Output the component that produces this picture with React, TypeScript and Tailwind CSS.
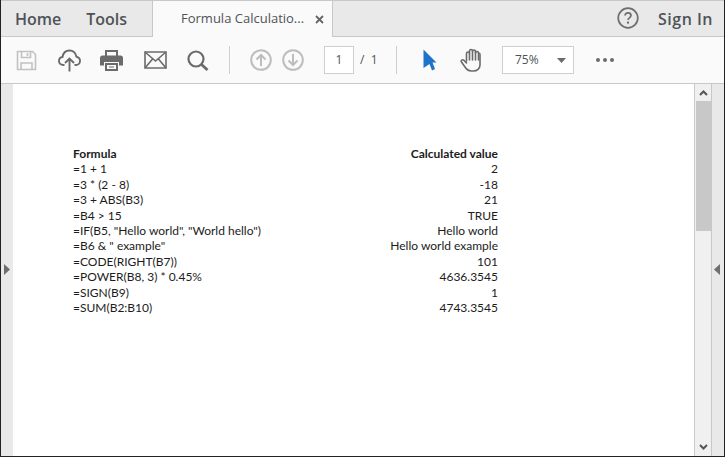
const ROWS: [string, string][] = [
  ["=1 + 1", "2"],
  ["=3 * (2 - 8)", "-18"],
  ["=3 + ABS(B3)", "21"],
  ["=B4 > 15", "TRUE"],
  ['=IF(B5, "Hello world", "World hello")', "Hello world"],
  ['=B6 & " example"', "Hello world example"],
  ["=CODE(RIGHT(B7))", "101"],
  ["=POWER(B8, 3) * 0.45%", "4636.3545"],
  ["=SIGN(B9)", "1"],
  ["=SUM(B2:B10)", "4743.3545"],
];

function Divider({ className }: { className: string }) {
  return <div className={`w-px h-[28px] bg-[#cfcfcf] shrink-0 ${className}`} />;
}

function TopBar() {
  return (
    <div className="flex h-[36px] bg-[#e9e9e9] border-b border-[#c8c8c8] text-[#4f5358] shrink-0">
      <div className="w-[151px] flex items-center pl-[14px] gap-[25px] text-[16px] font-semibold">
        <span>Home</span>
        <span>Tools</span>
      </div>
      <div className="w-[181px] h-[36px] bg-[#fafafa] border-x border-[#c8c8c8] flex items-center pl-[28px] text-[13px] relative">
        <span>Formula Calculatio...</span>
        <svg className="ml-[11px]" width="9" height="9" viewBox="0 0 9 9">
          <path d="M1 1l7 7M8 1l-7 7" stroke="#666" strokeWidth="1.8" />
        </svg>
      </div>
      <div className="flex-1 flex items-center justify-end pr-[11px]">
        <svg className="mr-[19px] mb-[1px]" width="22" height="22" viewBox="0 0 22 22" fill="none">
          <circle cx="11" cy="11" r="9.8" stroke="#6e6e6e" strokeWidth="1.7" />
          <path d="M8 8.6c0-1.8 1.3-2.8 3-2.8s3 1 3 2.6c0 2.4-3 2.4-3 4.6" stroke="#6e6e6e" strokeWidth="1.7" />
          <rect x="10" y="14.6" width="2" height="2" fill="#6e6e6e" />
        </svg>
        <span className="text-[16px] font-semibold tracking-[0.5px]">Sign In</span>
      </div>
    </div>
  );
}

function Toolbar() {
  return (
    <div className="flex items-center h-[47px] bg-[#fafafa] border-b border-[#c8c8c8] text-[#4f5358] shrink-0 text-[12px]">
      {/* save, disabled */}
      <svg className="ml-[15px] shrink-0" width="21" height="21" viewBox="0 0 21 21" fill="none" stroke="#c2c2c2" strokeWidth="1.6">
        <path d="M1.5 1.5h15l3 3v15h-18z" />
        <path d="M5.5 1.5v6h9v-6M11.5 3v3M5 19.500v-6.500h11v6.500" />
      </svg>
      {/* upload cloud */}
      <svg className="ml-[21px] shrink-0" width="23" height="23" viewBox="0 0 23 23" fill="none" stroke="#6b6b6b" strokeWidth="1.9">
        <path d="M6.500 16H5.200C2.800 16 1 14.200 1 12c0-2 1.500-3.800 3.500-4C5.200 4 8 1.500 11.500 1.500S17.600 4 18.500 7.700c2 .4 3.500 2 3.500 4.200 0 2.300-1.800 4.100-4.200 4.100h-1.300" />
        <path d="M11.500 22.500V10M7 14l4.500-4.500L16 14" />
      </svg>
      {/* print */}
      <svg className="ml-[19px] shrink-0" width="23" height="22" viewBox="0 0 23 22">
        <path d="M5 1h13v6h-2V3H7v4H5z" fill="#6b6b6b" />
        <path d="M2.500 6.500h18A2.500 2.500 0 0 1 23 9v7.500h-4V13H4v3.500H0V9a2.500 2.500 0 0 1 2.500-2.500z" fill="#6b6b6b" />
        <path d="M5 14h13v8H5z" fill="#6b6b6b" />
        <path d="M7 16h9v4H7z" fill="#fafafa" />
        <path d="M9 17.500h5v1H9z" fill="#6b6b6b" />
      </svg>
      {/* mail */}
      <svg className="ml-[21px] shrink-0" width="23" height="18" viewBox="0 0 23 18" fill="none" stroke="#6b6b6b" strokeWidth="1.6">
        <path d="M1 1h21v16H1z" />
        <path d="M1 1l10.500 9L22 1M1 17l7.500-9M22 17l-7.500-9" />
      </svg>
      {/* search */}
      <svg className="ml-[20px] shrink-0" width="22" height="21" viewBox="0 0 22 21" fill="none" stroke="#6b6b6b">
        <circle cx="9" cy="9" r="7.500" strokeWidth="2.200" />
        <path d="M14.500 14.500l6 5.500" strokeWidth="2.800" />
      </svg>
      <Divider className="ml-[20px]" />
      {/* prev / next page, disabled */}
      <svg className="ml-[20px] shrink-0" width="22" height="22" viewBox="0 0 22 22" fill="none" stroke="#bdbdbd" strokeWidth="2">
        <circle cx="11" cy="11" r="9.800" />
        <path d="M11 17V6M6.500 10.500L11 6l4.500 4.500" />
      </svg>
      <svg className="ml-[10px] shrink-0" width="22" height="22" viewBox="0 0 22 22" fill="none" stroke="#bdbdbd" strokeWidth="2">
        <circle cx="11" cy="11" r="9.800" />
        <path d="M11 5v11M6.500 11.500L11 16l4.500-4.500" />
      </svg>
      <div className="ml-[20px] w-[30px] h-[28px] border border-[#cfcfcf] bg-white flex items-center justify-center shrink-0">1</div>
      <span className="ml-[6px] w-[17px] whitespace-nowrap shrink-0">/ &nbsp;1</span>
      <Divider className="ml-[19px]" />
      {/* select cursor */}
      <svg className="ml-[26px] shrink-0" width="14" height="22" viewBox="0 0 14 22">
        <path d="M0.500 0.500L13.500 13.500H9.500L12 20l-3 1.500-2.500-6.500L0.500 19z" fill="#1f74c9" />
      </svg>
      {/* hand */}
      <svg className="ml-[23px] shrink-0" width="23" height="24" viewBox="0 0 23 24" fill="none" stroke="#6b6b6b" strokeWidth="1.600" strokeLinecap="round" strokeLinejoin="round">
        <path d="M6.500 13V5.500a1.500 1.500 0 0 1 3 0V3a1.500 1.500 0 0 1 3 0v.5a1.500 1.500 0 0 1 3 0V5a1.500 1.500 0 0 1 3 0c.8 0 1.500.7 1.500 1.500V17c0 3.500-3 6-6.500 6H11c-2.500 0-4-1.200-5.500-3.200L1.500 14c-1-1.500 1-3 2.300-1.800L6.500 15" />
        <path d="M9.500 5.500V12M12.500 3.500V12M15.500 4V12M18.500 5.500V12" />
      </svg>
      <div className="ml-[19px] w-[72px] h-[28px] border border-[#cfcfcf] bg-white flex items-center pl-[12px] shrink-0 relative">
        <span>75%</span>
        <svg className="absolute right-[7px] top-[11px]" width="9" height="5" viewBox="0 0 9 5">
          <path d="M0 0h9L4.500 5z" fill="#6b6b6b" />
        </svg>
      </div>
      <svg className="ml-[22px] shrink-0" width="18" height="4" viewBox="0 0 18 4" fill="#6b6b6b">
        <circle cx="2" cy="2" r="2" />
        <circle cx="9" cy="2" r="2" />
        <circle cx="16" cy="2" r="2" />
      </svg>
    </div>
  );
}

function Page() {
  return (
    <div className="flex-1 bg-white pt-[62px] pl-[60px] font-['Lato',sans-serif] text-[12px] leading-[15.400px] text-[#1c1c1c]">
      <div className="w-[425px]">
        <div className="flex justify-between font-bold">
          <span>Formula</span>
          <span>Calculated value</span>
        </div>
        {ROWS.map(([f, v]) => (
          <div key={f} className="flex justify-between">
            <span>{f}</span>
            <span>{v}</span>
          </div>
        ))}
      </div>
    </div>
  );
}

function Scrollbar() {
  return (
    <div className="w-[18px] border-l border-r border-[#c8c8c8] bg-[#f0f0f0] flex flex-col items-center shrink-0">
      <svg className="mt-[6px] shrink-0" width="9" height="6" viewBox="0 0 9 6" fill="none">
        <path d="M1 5l3.500-3.500L8 5" stroke="#555" strokeWidth="2" />
      </svg>
      <div className="w-[15px] h-[130px] bg-[#c8c8c8] mt-[5px]" />
      <svg className="mt-auto mb-[6px] shrink-0" width="9" height="6" viewBox="0 0 9 6" fill="none">
        <path d="M1 1l3.500 3.500L8 1" stroke="#555" strokeWidth="2" />
      </svg>
    </div>
  );
}

export default function App() {
  return (
    <div className="w-[725px] h-[457px] flex flex-col overflow-hidden bg-white border-l border-r border-b border-[#222] font-['Open_Sans',sans-serif]">
      <div className="h-px bg-[#c8c8c8] shrink-0" />
      <TopBar />
      <Toolbar />
      <div className="flex-1 flex min-h-0">
        <div className="w-[12px] bg-[#e9e9e9] flex items-center shrink-0">
          <svg className="ml-[3px] mt-[-2px]" width="6" height="11" viewBox="0 0 6 11">
            <path d="M0 0l6 5.500L0 11z" fill="#6e6e6e" />
          </svg>
        </div>
        <Page />
        <Scrollbar />
        <div className="w-[12px] bg-[#e9e9e9] flex items-center shrink-0">
          <svg className="ml-[2px] mt-[-2px]" width="6" height="11" viewBox="0 0 6 11">
            <path d="M6 0L0 5.500 6 11z" fill="#6e6e6e" />
          </svg>
        </div>
      </div>
    </div>
  );
}
